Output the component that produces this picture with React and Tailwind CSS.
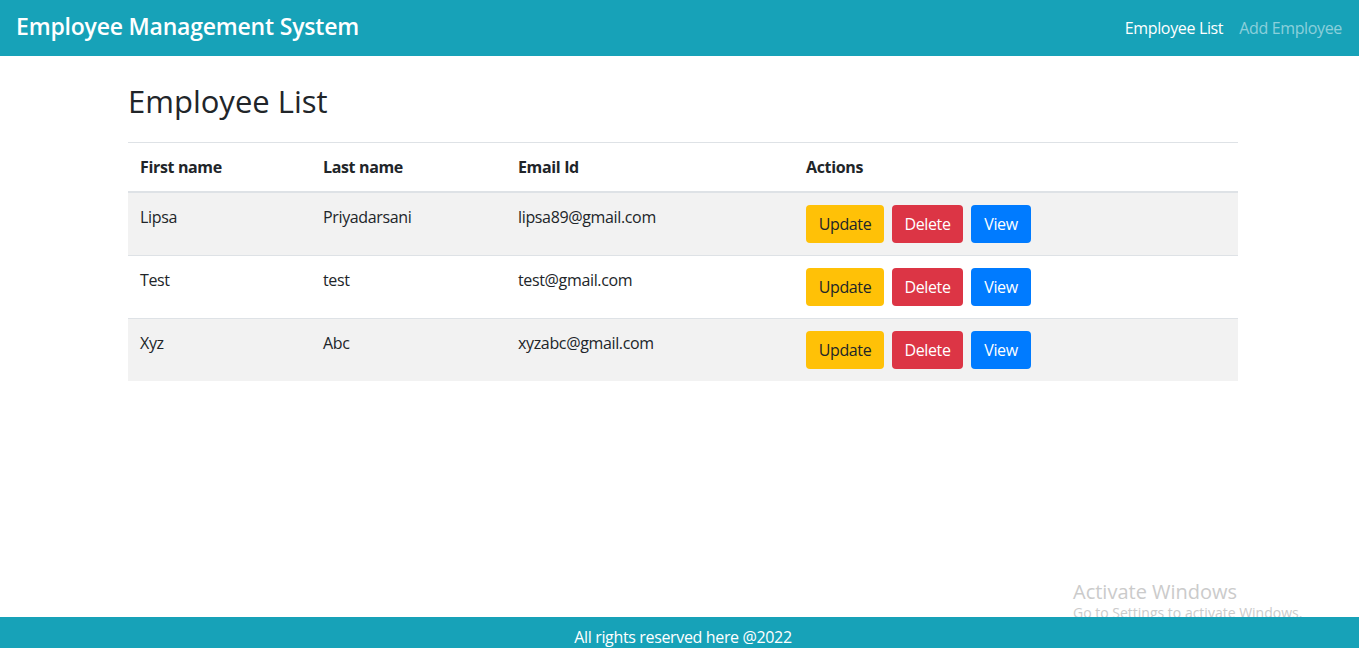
import React from "react";

const employees = [
  { id: 1, firstName: "Lipsa", lastName: "Priyadarsani", email: "lipsa89@gmail.com" },
  { id: 2, firstName: "Test", lastName: "test", email: "test@gmail.com" },
  { id: 3, firstName: "Xyz", lastName: "Abc", email: "xyzabc@gmail.com" },
];

const font = { fontFamily: '"Segoe UI", "Open Sans", "Noto Sans", sans-serif' };

export default function App() {
  return (
    <div
      className="relative h-[648px] flex flex-col bg-white text-[#212529] overflow-hidden tracking-[-0.35px]"
      style={font}
    >
      {/* Navbar */}
      <nav className="h-[56px] shrink-0 bg-[#17a2b8] flex items-center justify-between pl-4 pr-[17px]">
        <span className="text-[23px] font-semibold text-white leading-none -mt-[4px] tracking-[-0.2px]">
          Employee Management System
        </span>
        <div className="flex items-center gap-4 text-base">
          <a className="text-white">Employee List</a>
          <a className="text-white/50">Add Employee</a>
        </div>
      </nav>

      {/* Content */}
      <main className="flex-1">
        <div className="ml-[128px] w-[1110px]">
          <h2 className="mt-[26px] mb-[22px] text-[31px] leading-[38px] font-medium tracking-normal">
            Employee List
          </h2>

          <table className="w-full text-base border-collapse">
            <thead>
              <tr className="border-t border-[#dee2e6] border-b-2 text-left">
                <th className="p-3 font-bold w-[183px]">First name</th>
                <th className="p-3 font-bold w-[195px]">Last name</th>
                <th className="p-3 font-bold w-[288px]">Email Id</th>
                <th className="p-3 font-bold">Actions</th>
              </tr>
            </thead>
            <tbody>
              {employees.map((emp, i) => (
                <tr
                  key={emp.id}
                  className={`border-t border-[#dee2e6] ${i % 2 === 0 ? "bg-[#f2f2f2]" : "bg-white"}`}
                >
                  <td className="p-3 align-top">{emp.firstName}</td>
                  <td className="p-3 align-top">{emp.lastName}</td>
                  <td className="p-3 align-top">{emp.email}</td>
                  <td className="p-3 align-top">
                    <div className="flex gap-2">
                      <button className="h-[38px] w-[78px] rounded bg-[#ffc107] text-[#212529]">Update</button>
                      <button className="h-[38px] w-[71px] rounded bg-[#dc3545] text-white">Delete</button>
                      <button className="h-[38px] w-[60px] rounded bg-[#007bff] text-white">View</button>
                    </div>
                  </td>
                </tr>
              ))}
            </tbody>
          </table>
        </div>
      </main>

      {/* Windows watermark */}
      <div className="absolute left-[1073px] top-[579px] text-[#cbcbcb] leading-tight tracking-normal">
        <div className="text-[20px]">Activate Windows</div>
        <div className="text-[14px]">Go to Settings to activate Windows.</div>
      </div>

      {/* Footer */}
      <footer className="relative z-10 h-[31px] shrink-0 bg-[#17a2b8] text-white text-base text-center pt-2 leading-6">
        <span className="ml-[7px]">All rights reserved here @2022</span>
      </footer>
    </div>
  );
}
